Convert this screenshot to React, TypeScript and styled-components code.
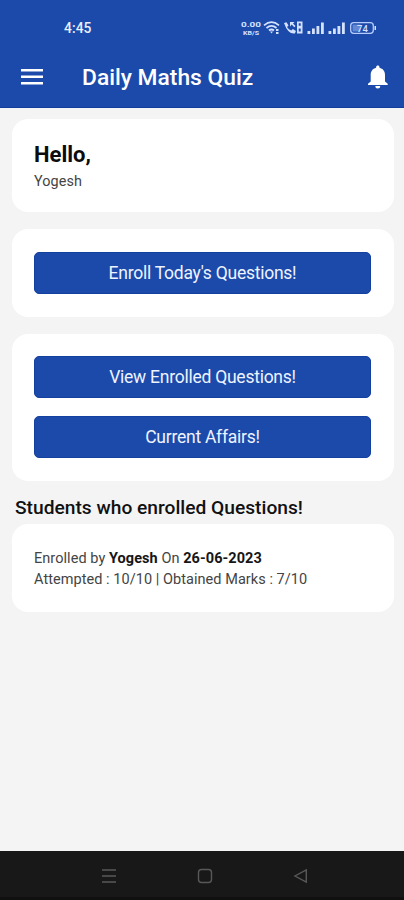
import React from "react";
import styled, { createGlobalStyle } from "styled-components";

const Global = createGlobalStyle`
  * { box-sizing: border-box; }
  body { margin: 0; background: #f4f4f4; font-family: Roboto, sans-serif; }
`;

const Screen = styled.div`
  width: 404px;
  height: 900px;
  display: flex;
  flex-direction: column;
  overflow: hidden;
  background: #f4f4f4;
`;

const Header = styled.header`
  height: 108px;
  flex: none;
  background: #1b4aab;
  border-bottom: 1px solid #143c9c;
  color: #fff;
`;

const StatusBar = styled.div`
  height: 46px;
  padding: 10px 27px 0 64px;
  display: flex;
  align-items: center;
  justify-content: space-between;
`;

const Clock = styled.span`
  font-size: 13.8px;
  line-height: 18px;
  font-weight: 500;
  letter-spacing: 0.1px;
  color: #e9effc;
`;

const StatusIcons = styled.svg`
  display: block;
  width: 137px;
  height: 18px;
`;

const Toolbar = styled.div`
  height: 61px;
  display: flex;
  align-items: center;
  padding: 0 15px 0 21px;
`;

const Title = styled.h1`
  flex: 1;
  margin: 2px 0 0 39px;
  font-size: 22.8px;
  line-height: 28px;
  font-weight: 500;
  letter-spacing: 0;
`;

const IconButton = styled.button`
  display: flex;
  padding: 0;
  border: 0;
  background: none;
  color: inherit;
`;

const Content = styled.main`
  flex: 1;
  padding: 11px 10px 0 12px;
`;

const Card = styled.section<{ $height: number; $gap?: number; $top?: number }>`
  height: ${(p) => p.$height}px;
  margin-bottom: ${(p) => p.$gap ?? 17}px;
  padding: ${(p) => p.$top ?? 22}px 23px 0 22px;
  border-radius: 16px;
  background: #fff;
`;

const Greeting = styled.h2`
  margin: 0;
  font-size: 22px;
  line-height: 26px;
  font-weight: 700;
  color: #0c0c0c;
`;

const UserName = styled.p`
  margin: 4px 0 0;
  font-size: 14.4px;
  line-height: 20px;
  letter-spacing: 0.1px;
  color: #444;
`;

const ActionButton = styled.button`
  display: block;
  width: 100%;
  height: 42px;
  padding: 0;
  border: 1px solid #1440a0;
  border-radius: 5px;
  background: #1b4aab;
  color: #eef3ff;
  font: 400 17.5px/40px Roboto, sans-serif;
  letter-spacing: -0.25px;

  & + & { margin-top: 17.5px; }
`;

const SectionTitle = styled.h2`
  margin: 0 0 4px 3px;
  font-size: 19.2px;
  line-height: 24px;
  font-weight: 500;
  color: #111;
`;

const Detail = styled.p<{ $spacing: number }>`
  margin: 0;
  font-size: 14.5px;
  line-height: 21px;
  letter-spacing: ${(p) => p.$spacing}px;
  color: #444;
  white-space: nowrap;

  b { font-weight: 700; color: #161616; }
`;

const NavigationBar = styled.nav`
  height: 49px;
  flex: none;
  display: flex;
  justify-content: space-between;
  padding: 17px 95px 0 101px;
  background: #181818;
  border-bottom: 3px solid #101010;
`;

const NavIcon = styled.svg`
  width: 16px;
  height: 16px;
  fill: none;
  stroke: #585858;
  stroke-width: 1.4;
`;

const SignalBars = ({ x }: { x: number }) => (
  <path d={`M${x} 15v-3h2.800v3zM${x + 4.5} 15v-5.5h2.800v5.5zM${x + 9} 15v-8h2.800v8zM${x + 13.5} 15v-11.5h2.800v11.5z`} />
);

export default function App() {
  return (
    <>
      <Global />
      <Screen>
        <Header>
          <StatusBar>
            <Clock>4:45</Clock>
            <StatusIcons viewBox="0 0 137 18" fill="#d5e2ff" fontFamily="Roboto, sans-serif">
              <text x="1" y="8" fontSize="8" fontWeight="700" textLength="20" lengthAdjust="spacingAndGlyphs">0.00</text>
              <text x="3" y="16" fontSize="6" fontWeight="700" textLength="16" lengthAdjust="spacingAndGlyphs">KB/S</text>
              <g fill="none" stroke="#d5e2ff" strokeWidth="1.7">
                <path d="M24 6.3Q31.500 0 39 6.3M26.500 9Q31.500 4.800 36.500 9M29 11.500Q31.500 9.500 34 11.500" />
              </g>
              <path d="M30 12.500h3l-1.500 2zM36 10h2.500v2h-2.500zM36 13h2.500v2h-2.500z" />
              <path d="M44 4l2.500-.8 2 3.200-1.500 1.500q1.500 2.700 4.200 3.600l1.700-1.500 3 2-1 2.500Q48 15.500 44 4z" />
              <path d="M50 7.500V3h4.500L53 4.500l2.500 2.500-1.200 1.200-2.600-2.600z" />
              <path d="M57 2.500h5.500v12H57zM58.700 4.200v2.500h2V4.200zM58.700 9.500v3h2v-3z" fillRule="evenodd" />
              <SignalBars x={67.5} />
              <SignalBars x={88.5} />
              <rect x="110.700" y="3.700" width="22.600" height="10.600" rx="3" fill="none" stroke="#b8ccfa" strokeWidth="1.300" />
              <path d="M112.500 5.500h8v7h-8z" fill="#6288d4" />
              <text x="117" y="12.500" fontSize="9.500" fontWeight="500">74</text>
              <path d="M134.500 7h1.500v4h-1.500z" />
            </StatusIcons>
          </StatusBar>
          <Toolbar>
            <IconButton aria-label="Menu">
              <svg width="22" height="16" viewBox="0 0 22 16" fill="currentColor">
                <path d="M0 0h22v2.400H0zM0 6.500h22v2.400H0zM0 13h22v2.400H0z" />
              </svg>
            </IconButton>
            <Title>Daily Maths Quiz</Title>
            <IconButton aria-label="Notifications">
              <svg width="22" height="26" viewBox="0 0 22 26" fill="currentColor">
                <path d="M10.800 24.500a2.400 2.400 0 0 0 2.400-2.500H8.400a2.400 2.400 0 0 0 2.400 2.500zM18 17.500V11c0-4-2.200-6.500-5.500-7.300v-.5c0-2.300-3.400-2.300-3.400 0v.5C5.800 4.500 3.700 7 3.700 11v6.500L1 19.800V21h19.700v-1.200z" />
              </svg>
            </IconButton>
          </Toolbar>
        </Header>
        <Content>
          <Card $height={93} $top={23}>
            <Greeting>Hello,</Greeting>
            <UserName>Yogesh</UserName>
          </Card>
          <Card $height={88} $top={23}>
            <ActionButton>Enroll Today's Questions!</ActionButton>
          </Card>
          <Card $height={147} $gap={15}>
            <ActionButton>View Enrolled Questions!</ActionButton>
            <ActionButton>Current Affairs!</ActionButton>
          </Card>
          <SectionTitle>Students who enrolled Questions!</SectionTitle>
          <Card $height={88} $top={24}>
            <Detail $spacing={0.06}>Enrolled by <b>Yogesh</b> On <b>26-06-2023</b></Detail>
            <Detail $spacing={0.05}>Attempted : 10/10 | Obtained Marks : 7/10</Detail>
          </Card>
        </Content>
        <NavigationBar>
          <NavIcon viewBox="0 0 16 16"><path d="M1 2h14M1 8h14M1 14h14" /></NavIcon>
          <NavIcon viewBox="0 0 16 16"><rect x="1.500" y="1.500" width="13" height="13" rx="3" /></NavIcon>
          <NavIcon viewBox="0 0 16 16"><path d="M13.300 2v12L2 8z" /></NavIcon>
        </NavigationBar>
      </Screen>
    </>
  );
}
